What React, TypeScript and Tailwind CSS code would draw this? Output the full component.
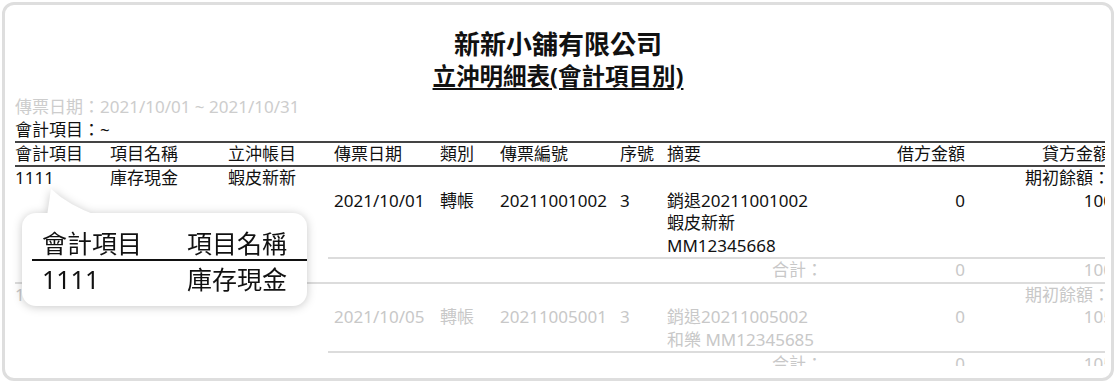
import React from 'react';

type Entry = {
  code: string;
  name: string;
  partner: string;
  date: string;
  kind: string;
  voucher: string;
  seq: string;
  memo: string[];
  debit: string;
  credit: string;
  muted?: boolean;
};

const entries: Entry[] = [
  {
    code: '1111', name: '庫存現金', partner: '蝦皮新新',
    date: '2021/10/01', kind: '轉帳', voucher: '20211001002', seq: '3',
    memo: ['銷退20211001002', '蝦皮新新', 'MM12345668'], debit: '0', credit: '100',
  },
  {
    code: '1111', name: '庫存現金', partner: '和樂',
    date: '2021/10/05', kind: '轉帳', voucher: '20211005001', seq: '3',
    memo: ['銷退20211005002', '和樂 MM12345685'], debit: '0', credit: '105', muted: true,
  },
];

// same column template for every row of the report
const grid = 'grid grid-cols-[95px_118px_100px_106px_60px_120px_47px_162px_142px_148px] w-[1098px]';
const line = 'border-b-2 border-[#dcdcdc]';

function Group({ entry }: { entry: Entry }) {
  const tone = entry.muted ? 'text-[#c8c8c8]' : 'text-[#111]';
  return (
    <>
      <div className={`${grid} ${tone}`}>
        <div>{entry.code}</div>
        <div>{entry.name}</div>
        <div>{entry.partner}</div>
        <div /><div /><div /><div /><div /><div />
        <div className="text-right pr-[3px]">期初餘額：</div>
      </div>
      <div className={`${grid} ${tone}`}>
        <div /><div /><div />
        <div className={`pl-[6px] ${line}`}>{entry.date}</div>
        <div className={`pl-[6px] ${line}`}>{entry.kind}</div>
        <div className={`pl-[6px] ${line}`}>{entry.voucher}</div>
        <div className={`pl-[6px] ${line}`}>{entry.seq}</div>
        <div className={`pl-[6px] ${line}`}>
          {entry.memo.map((m) => <div key={m}>{m}</div>)}
        </div>
        <div className={`text-right ${line}`}>{entry.debit}</div>
        <div className={`text-right ${line}`}>{entry.credit}</div>
      </div>
      <div className={`${grid} text-[#c8c8c8]`}>
        <div className={line} /><div className={line} /><div className={line} />
        <div className={line} /><div className={line} /><div className={line} /><div className={line} />
        <div className={`text-right ${line}`}>合計：</div>
        <div className={`text-right ${line}`}>{entry.debit}</div>
        <div className={`text-right ${line}`}>{entry.credit}</div>
      </div>
    </>
  );
}

export default function App() {
  return (
    <div className="w-[1119px] h-[383px] bg-white p-[2px] font-['Noto_Sans','Noto_Sans_CJK_TC',sans-serif]">
      <div className="relative flex flex-col w-[1112px] h-[379px] border-[3px] border-[#dedede] rounded-[12px] pt-[22px] pb-[12px] overflow-hidden">
        <h1 className="text-center text-[26px] leading-[34px] font-bold text-[#111]">新新小舖有限公司</h1>
        <h2 className="text-center text-[23.5px] leading-[30px] font-bold text-[#111] underline decoration-2 underline-offset-[3px]">
          立沖明細表(會計項目別)
        </h2>

        <div className="flex-1 min-h-0 overflow-hidden ml-[10px] mr-[6px] mt-[4px] text-[17px] leading-[22.5px]">
          <div className="leading-[23px] text-[#cdcdcd]">傳票日期：2021/10/01 ~ 2021/10/31</div>
          <div className="leading-[23px] text-[#111]">會計項目：~</div>

          <div className={`${grid} leading-[22px] border-y-2 border-[#444] text-[#111]`}>
            <div>會計項目</div>
            <div>項目名稱</div>
            <div>立沖帳目</div>
            <div className="pl-[6px]">傳票日期</div>
            <div className="pl-[6px]">類別</div>
            <div className="pl-[6px]">傳票編號</div>
            <div className="pl-[6px]">序號</div>
            <div className="pl-[6px]">摘要</div>
            <div className="text-right">借方金額</div>
            <div className="text-right pr-[3px]">貸方金額</div>
          </div>

          {entries.map((e, i) => <Group key={i} entry={e} />)}
        </div>

        {/* callout over the first account */}
        <div className="absolute left-[17px] top-[183px] w-[290px] h-[118px] drop-shadow-[0_1px_5px_rgba(0,0,0,0.22)]">
          <svg className="absolute left-[24px] top-0" width="52" height="28" viewBox="0 0 52 28">
            <path d="M5 1 L1 28 L52 28 Q22 17 5 1 Z" fill="#fff" />
          </svg>
          <div className="absolute left-0 top-[25px] w-[285px] h-[93px] bg-white rounded-[14px] pt-[14px] text-[25px] leading-[32px] text-[#111]">
            <div className="flex pl-[20px]">
              <div className="w-[145px]">會計項目</div>
              <div>項目名稱</div>
            </div>
            <div className="ml-[10px] h-[2px] bg-[#111]" />
            <div className="flex pl-[20px] pt-[2px]">
              <div className="w-[145px]">1111</div>
              <div>庫存現金</div>
            </div>
          </div>
        </div>
      </div>
    </div>
  );
}
